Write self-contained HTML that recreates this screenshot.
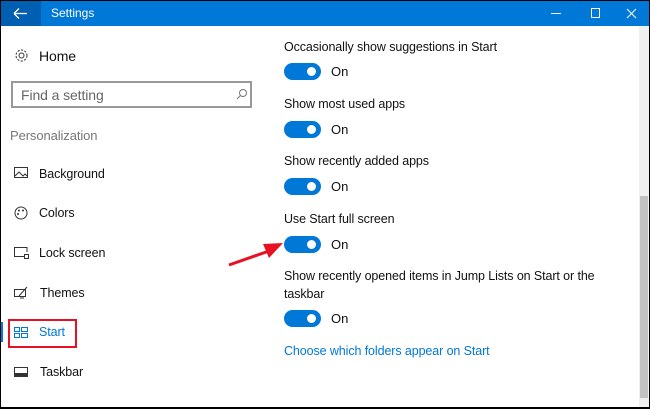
<!DOCTYPE html>
<html><head><style>
*{margin:0;padding:0;box-sizing:border-box}
body{width:650px;height:409px;overflow:hidden;background:#000;font-family:"Liberation Sans",sans-serif;position:relative}
.win{position:absolute;left:1px;top:1px;width:648px;height:406px;background:#fff;overflow:hidden}
.tb{position:absolute;left:0;top:0;width:648px;height:25px;background:#0078d7;color:#fff;font-size:12px}
.back{position:absolute;left:0;top:0;width:40px;height:25px;background:#005fb0}
.t{position:absolute;font-size:12.5px;color:#111;white-space:nowrap;letter-spacing:-0.1px}
.ic{position:absolute}
.tog{position:absolute;left:283px;width:37px;height:17px;border-radius:9px;background:#0078d7}
.tog::after{content:"";position:absolute;right:5px;top:4px;width:9px;height:9px;border-radius:50%;background:#fff}
.on{position:absolute;left:330px;font-size:13px;color:#111}
</style></head><body>
<div class="win">
<div class="tb"><div class="back"><svg width="40" height="25"><path d="M13 12.5H26M13 12.5L18 7.5M13 12.5L18 17.5" stroke="#fff" stroke-width="1.3" fill="none"/></svg></div>
<span style="position:absolute;left:50px;top:5px">Settings</span>
<svg style="position:absolute;left:540px;top:0" width="108" height="25"><path d="M10 12.5H20" stroke="#fff"/><rect x="50.5" y="7.5" width="8" height="9" stroke="#fff" fill="none"/><path d="M86 8L95 17M95 8L86 17" stroke="#fff"/></svg></div>

<svg class="ic" style="left:13px;top:47px" width="15" height="15"><circle cx="7.5" cy="7.5" r="2.5" fill="none" stroke="#333"/><circle cx="7.5" cy="7.5" r="5.5" fill="none" stroke="#333" stroke-dasharray="2.2 1.4"/></svg>
<div class="t" style="left:38px;top:47px;font-size:14px">Home</div>
<div style="position:absolute;left:10px;top:80px;width:241px;height:27px;border:2px solid #999"></div>
<div class="t" style="left:20px;top:86px;color:#666;font-size:14px">Find a setting</div>
<svg class="ic" style="left:235px;top:87px" width="12" height="12"><circle cx="7" cy="5" r="3.5" fill="none" stroke="#777"/><path d="M4.5 7.5L1 11" stroke="#777"/></svg>
<div class="t" style="left:9px;top:127px;color:#777;font-size:13px">Personalization</div>

<svg class="ic" style="left:13px;top:166px" width="14" height="12"><rect x=".5" y=".5" width="13" height="10" fill="none" stroke="#333"/><path d="M1 9L5 5L9 9L11 7L13 9" stroke="#333" fill="none"/></svg>
<div class="t" style="left:38px;top:166px">Background</div>
<svg class="ic" style="left:13px;top:205px" width="14" height="14"><circle cx="7" cy="7" r="6" fill="none" stroke="#333"/><circle cx="5" cy="4.5" r="1" fill="#333"/><circle cx="9" cy="4.5" r="1" fill="#333"/><circle cx="4" cy="8" r="1" fill="#333"/></svg>
<div class="t" style="left:38px;top:205px">Colors</div>
<svg class="ic" style="left:13px;top:246px" width="15" height="12"><path d="M10 9.5H.5V.5H13V5" fill="none" stroke="#333"/><rect x="10.5" y="7.5" width="4" height="4" fill="none" stroke="#333"/></svg>
<div class="t" style="left:38px;top:245px">Lock screen</div>
<svg class="ic" style="left:13px;top:285px" width="15" height="13"><rect x=".5" y="3.5" width="11" height="7" fill="none" stroke="#333"/><path d="M5 10L13 1M6 12h4" stroke="#333"/></svg>
<div class="t" style="left:39px;top:285px">Themes</div>
<div style="position:absolute;left:-1px;top:321px;width:3px;height:20px;background:#0078d7"></div>
<div style="position:absolute;left:7px;top:318px;width:69px;height:29px;border:2px solid #e81123"></div>
<svg class="ic" style="left:13px;top:326px" width="14" height="12"><rect x=".5" y=".5" width="5" height="4" fill="none" stroke="#0078d7"/><rect x="7.5" y=".5" width="6" height="4" fill="none" stroke="#0078d7"/><rect x=".5" y="6.5" width="5" height="4" fill="none" stroke="#0078d7"/><rect x="7.5" y="6.5" width="6" height="4" fill="none" stroke="#0078d7"/></svg>
<div class="t" style="left:38px;top:324px;color:#0078d7">Start</div>
<svg class="ic" style="left:13px;top:366px" width="14" height="10"><rect x=".5" y=".5" width="13" height="9" fill="none" stroke="#333"/><rect x="1" y="6" width="12" height="3" fill="#333"/></svg>
<div class="t" style="left:39px;top:364px">Taskbar</div>

<div class="t" style="left:283px;top:39px">Occasionally show suggestions in Start</div>
<div class="tog" style="top:62px"></div><div class="on" style="top:63px">On</div>
<div class="t" style="left:283px;top:96px">Show most used apps</div>
<div class="tog" style="top:120px"></div><div class="on" style="top:121px">On</div>
<div class="t" style="left:283px;top:153px">Show recently added apps</div>
<div class="tog" style="top:177px"></div><div class="on" style="top:178px">On</div>
<div class="t" style="left:283px;top:211px">Use Start full screen</div>
<div class="tog" style="top:235px"></div><div class="on" style="top:236px">On</div>
<div class="t" style="left:283px;top:268px">Show recently opened items in Jump Lists on Start or the</div>
<div class="t" style="left:283px;top:286px">taskbar</div>
<div class="tog" style="top:309px"></div><div class="on" style="top:310px">On</div>
<div class="t" style="left:283px;top:343px;color:#0078d7">Choose which folders appear on Start</div>

<svg style="position:absolute;left:0;top:0" width="648" height="406"><path d="M228 264L268 250" stroke="#e81123" stroke-width="3"/><path d="M282 242L262 243L268 257Z" fill="#e81123"/></svg>

<div style="position:absolute;left:638px;top:25px;width:10px;height:381px;background:#f0f0f0"></div>
<div style="position:absolute;left:639px;top:195px;width:8px;height:202px;background:#c2c2c2"></div>
</div>
</body></html>
